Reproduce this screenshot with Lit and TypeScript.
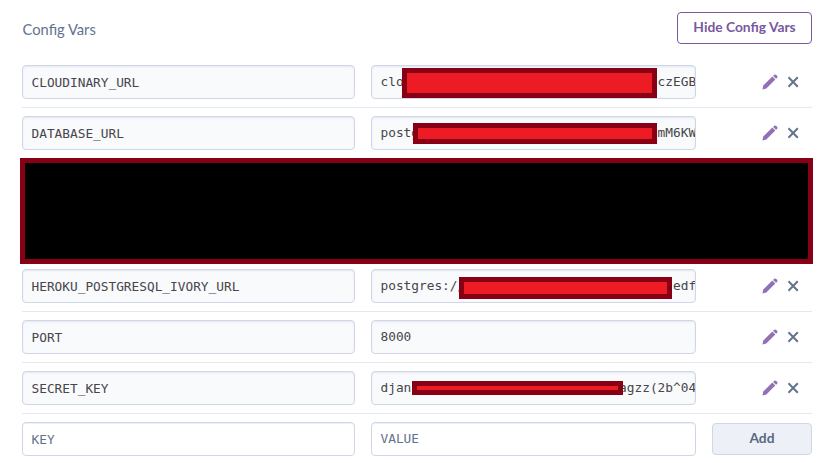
import { LitElement, html, css, nothing } from "lit";
import { customElement, property } from "lit/decorators.js";

interface Mask { x: number; y: number; w: number; h: number }
interface ConfigVar { key: string; value: string; mask?: Mask }

const COLUMNS = 41;
const masked = (head: string, tail: string) => head.padEnd(COLUMNS - tail.length, "\u00a0") + tail;

// Mask offsets are relative to the value field.
const VARS: ConfigVar[] = [
  { key: "CLOUDINARY_URL", value: masked("clo", "czEGB"), mask: { x: 31, y: 3, w: 255, h: 30 } },
  { key: "DATABASE_URL", value: masked("postg", "mM6KW"), mask: { x: 42, y: 7, w: 244, h: 21 } },
  { key: "", value: "" },
  { key: "", value: "" },
  { key: "HEROKU_POSTGRESQL_IVORY_URL", value: masked("postgres://", "edf"), mask: { x: 88, y: 8, w: 213, h: 22 } },
  { key: "PORT", value: "8000" },
  { key: "SECRET_KEY", value: masked("djan", "agzz(2b^04"), mask: { x: 41, y: 10, w: 211, h: 14 } },
];

const rowStyles = css`
  :host { display: block; }
  * { box-sizing: border-box; }
  .row {
    display: grid;
    grid-template-columns: 333px 325px 1fr;
    column-gap: 16px;
    align-items: center;
    padding: 8px 0;
    height: 51px;
    border-bottom: 1px solid #e6e7f3;
  }
  .row.last { border-bottom-color: transparent; }
  .cell { position: relative; }
  .field {
    height: 34px;
    padding: 0 0 0 8.5px;
    border: 1px solid #cfd7e6;
    border-radius: 4px;
    background: #f9fafc;
    box-shadow: inset 0 1px 2px #e3e8f1;
    color: #46464b;
    font: 12.8px/33px "DejaVu Sans Mono", monospace;
    letter-spacing: -0.007px;
    white-space: pre;
    overflow: hidden;
  }
  .value { line-height: 31px; }
  .empty { background: #fff; color: #62738d; box-shadow: inset 0 1px 1px #eceff5; }
  .mask {
    position: absolute;
    border: 5px solid #880015;
    background: #ed1c24;
  }
  .actions { display: flex; align-items: center; justify-content: flex-end; gap: 10px; padding-right: 13px; }
  svg { display: block; }
  .add {
    height: 32px;
    border: 1px solid #cfd7e6;
    border-radius: 4px;
    background: #edf0f6;
    color: #596981;
    font: 700 13.8px/28px Lato, sans-serif;
    text-align: center;
    padding: 0 0 2px;
  }
`;

@customElement("config-row")
export class ConfigRow extends LitElement {
  static styles = rowStyles;
  @property({ attribute: false }) item!: ConfigVar;

  render() {
    const { key, value, mask: m } = this.item;
    return html`<div class="row">
      <div class="field">${key}</div>
      <div class="cell">
        <div class="field value">${value}</div>
        ${m ? html`<div class="mask" style="left:${m.x}px;top:${m.y}px;width:${m.w}px;height:${m.h}px"></div>` : nothing}
      </div>
      <div class="actions">
        <svg width="16" height="16" viewBox="0 0 16 16" fill="#9270b7">
          <path d="M.4 15.6 1.3 11.5 10.3 2.6 13.3 5.6 4.3 14.4Z" />
          <path d="M11.1 1.9 12.3.8Q13.2 0 14.2.9L15.1 1.8Q16 2.8 15.2 3.7L14.1 4.8Z" />
        </svg>
        <svg width="11" height="12" viewBox="0 0 11 12" fill="none" stroke="#62738d" stroke-width="2">
          <path d="M.4 1.3 9.8 10.7M9.8 1.3.4 10.7" />
        </svg>
      </div>
    </div>`;
  }
}

@customElement("new-config-row")
export class NewConfigRow extends LitElement {
  static styles = rowStyles;
  render() {
    return html`<div class="row last">
      <div class="field empty">KEY</div>
      <div class="field value empty">VALUE</div>
      <button class="add">Add</button>
    </div>`;
  }
}

@customElement("app-root")
export class AppRoot extends LitElement {
  static styles = css`
    :host { display: block; height: 463px; overflow: hidden; background: #fff; }
    * { box-sizing: border-box; }
    .panel { width: 790px; margin-left: 22px; }
    .header { display: flex; justify-content: space-between; align-items: flex-start; height: 57px; padding-top: 12px; }
    .title { font: 400 14.7px/34px Lato, sans-serif; color: #62738d; padding-left: 0.6px; }
    .toggle {
      width: 135px;
      height: 32px;
      padding: 0 0 2px;
      border: 1px solid #79589f;
      border-radius: 4px;
      background: #fff;
      color: #79589f;
      font: 700 13.8px/28px Lato, sans-serif;
    }
    .rows { position: relative; }
    .blackout {
      position: absolute;
      left: -2px;
      top: 101px;
      width: 793px;
      height: 106px;
      border: 5px solid #880015;
      background: #000;
    }
  `;

  render() {
    return html`<div class="panel">
      <div class="header">
        <div class="title">Config Vars</div>
        <button class="toggle">Hide Config Vars</button>
      </div>
      <div class="rows">
        ${VARS.map((item) => html`<config-row .item=${item}></config-row>`)}
        <new-config-row></new-config-row>
        <div class="blackout"></div>
      </div>
    </div>`;
  }
}
